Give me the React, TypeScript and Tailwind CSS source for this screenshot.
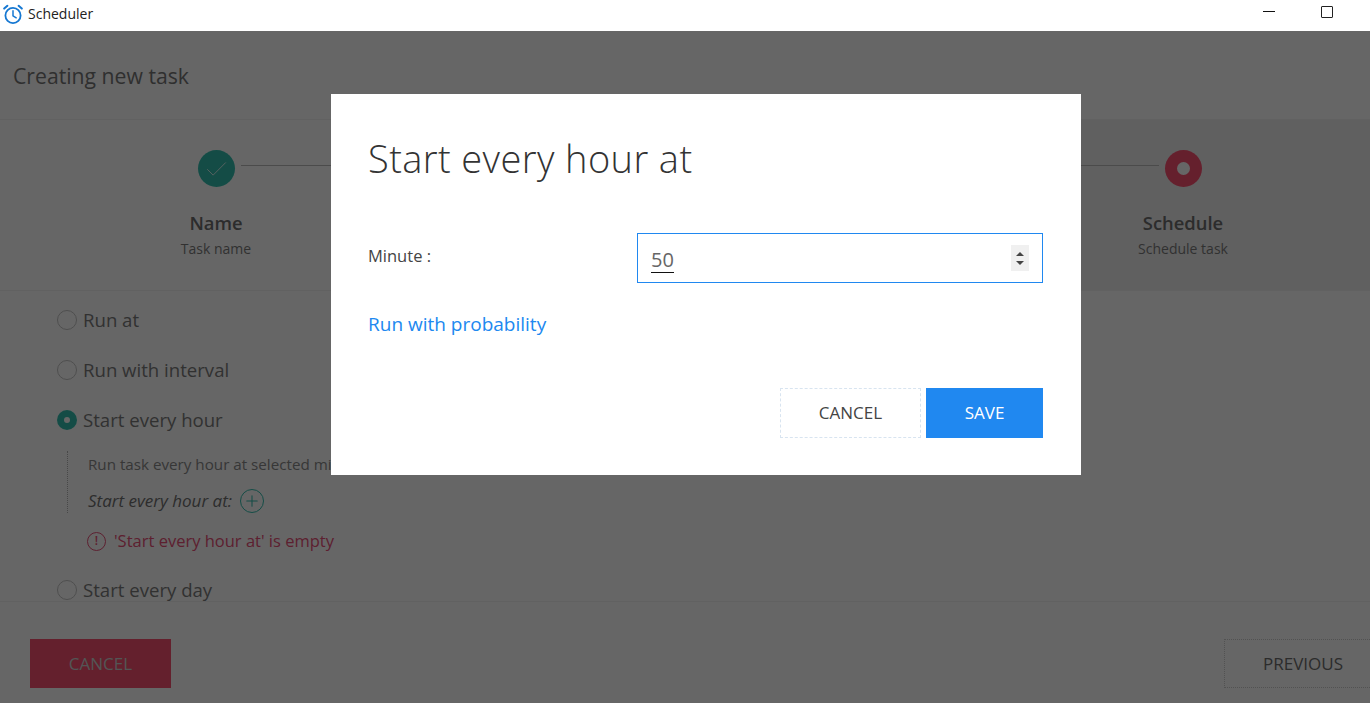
import React from 'react';
import { Check, Plus, X } from 'lucide-react';

const Radio: React.FC<{ label: string; checked?: boolean }> = ({ label, checked }) => (
  <div className="flex items-center gap-[6px] h-[20px]">
    {checked ? (
      <span className="w-[20px] h-[20px] rounded-full bg-[#33bfb0] flex items-center justify-center">
        <span className="w-[6px] h-[6px] rounded-full bg-white" />
      </span>
    ) : (
      <span className="w-[20px] h-[20px] rounded-full border border-[#c4c4c4] bg-white" />
    )}
    <span className="text-[18.6px] leading-[20px] text-[#7c7c7c]">{label}</span>
  </div>
);

const ClockLogo = () => (
  <svg viewBox="0 0 20 20" className="ml-[3px] w-[20px] h-[20px] mb-[3px]" fill="none" stroke="#1678d2" strokeLinecap="round">
    <circle cx="10" cy="11.5" r="7.6" strokeWidth="1.8" />
    <path d="M10 6.8v5l3.2 2" strokeWidth="1.5" />
    <path d="M1.2 4.6 4.4 1.8M18.8 4.6 15.6 1.8" strokeWidth="2" />
  </svg>
);

export default function App() {
  return (
    <div className="relative w-[1370px] h-[703px] overflow-hidden bg-white flex flex-col font-['Open_Sans',sans-serif]">
      <div className="h-[31px] shrink-0 flex items-center bg-white relative z-10">
        <ClockLogo />
        <span className="ml-[5px] mb-[4px] text-[14px] text-[#222222]">Scheduler</span>
        <div className="ml-auto flex items-start self-start mr-[37px] gap-[46px]">
          <span className="mt-[11px] w-[12px] border-t border-[#111111]" />
          <span className="mt-[6px] w-[12px] h-[12px] border border-[#222222] rounded-[1px]" />
        </div>
      </div>

      <div className="h-[89px] shrink-0 flex items-center justify-between border-b border-[#f2f2f2] pl-[13px] pt-[1px]">
        <span className="text-[21.2px] text-[#777777]">Creating new task</span>
        <X className="w-[24px] h-[24px] -mr-[21px] text-[#777777]" strokeWidth={1.5} />
      </div>

      <div className="h-[171px] shrink-0 border-b border-[#f2f2f2] bg-[linear-gradient(to_right,#ffffff_50%,#f0f0f0_50%)]">
        <div className="flex items-start pl-[198px] pt-[30px]">
          <span className="w-[37px] h-[37px] rounded-full bg-[#33bfb0] flex items-center justify-center">
            <Check className="w-[27px] h-[27px] mt-[2px] text-[#ffffff]" strokeWidth={0.7} />
          </span>
          <span className="ml-[6px] mt-[15px] w-[918px] border-t border-[#bbbbbb]" />
          <span className="ml-[6px] w-[37px] h-[37px] rounded-full bg-[#fd5071] flex items-center justify-center">
            <span className="w-[13px] h-[13px] rounded-full bg-white" />
          </span>
        </div>
        <div className="flex pl-[116px] pt-[24px] text-center">
          <div className="w-[200px]">
            <div className="text-[18.4px] leading-[24px] font-semibold text-[#6e6e6e]">Name</div>
            <div className="text-[14px] leading-[20px] mt-[4px] text-[#7c7c7c]">Task name</div>
          </div>
          <div className="ml-[767px] w-[200px]">
            <div className="text-[18.4px] leading-[24px] font-semibold text-[#6e6e6e]">Schedule</div>
            <div className="text-[14px] leading-[20px] mt-[4px] text-[#7c7c7c]">Schedule task</div>
          </div>
        </div>
      </div>

      <div className="h-[311px] shrink-0 overflow-hidden border-b border-[#f2f2f2] pl-[57px] pt-[19px]">
        <div className="flex flex-col gap-[30px]">
          <Radio label="Run at" />
          <Radio label="Run with interval" />
          <Radio checked label="Start every hour" />
        </div>
        <div className="ml-[10px] mt-[21px] h-[62px] border-l border-dotted border-[#b4b4b4] pl-[20px] pt-[3px]">
          <div className="text-[15.2px] leading-[20px] text-[#8a8a8a] whitespace-nowrap">Run task every hour at selected minute</div>
          <div className="flex items-center mt-[15px] h-[24px]">
            <span className="text-[17px] italic text-[#707070]">Start every hour at:</span>
            <span className="ml-[8px] w-[24px] h-[24px] rounded-full border border-[#33bfb0] flex items-center justify-center">
              <Plus className="w-[18px] h-[18px] text-[#33bfb0]" strokeWidth={1.4} />
            </span>
          </div>
        </div>
        <div className="flex items-center ml-[30px] mt-[17px] h-[22px]">
          <span className="w-[19px] h-[19px] rounded-full border-[1.5px] border-[#e85078] flex items-center justify-center text-[12px] font-semibold leading-none text-[#e85078]">!</span>
          <span className="ml-[8px] text-[16.5px] text-[#e85078]">'Start every hour at' is empty</span>
        </div>
        <div className="mt-[28px]">
          <Radio label="Start every day" />
        </div>
      </div>

      <div className="flex-1 flex items-start justify-between pl-[30px] pt-[37px]">
        <button className="w-[141px] h-[49px] bg-[#fa5070] text-[#cfd4d4] text-[17px]">CANCEL</button>
        <button className="w-[160px] -mr-[14px] h-[49px] pr-[2px] border border-dotted border-[#cccccc] text-[#6e6e6e] text-[17px]">PREVIOUS</button>
      </div>

      <div className="absolute left-0 right-0 top-[31px] bottom-0 bg-black/60" />

      <div className="absolute left-[331px] top-[94px] w-[750px] h-[381px] bg-white pl-[37px] pr-[38px] pt-[39px]">
        <h2 className="text-[38px] leading-[50px] tracking-[0.4px] font-light text-[#333333]">Start every hour at</h2>
        <div className="flex items-center mt-[50px]">
          <span className="w-[269px] pb-[4px] text-[16.5px] text-[#444444]">Minute :</span>
          <div className="w-[406px] h-[50px] border border-[#2088f0] flex items-center pl-[13px] pr-[13px]">
            <span className="text-[20px] leading-[24px] mt-[5px] text-[#666666] border-b border-[#111111]">50</span>
            <div className="ml-auto w-[18px] h-[26px] bg-[#f0f0f0] flex flex-col items-center justify-center gap-[5px]">
              <span className="w-0 h-0 border-x-[4px] border-x-transparent border-b-[4px] border-b-[#444444]" />
              <span className="w-0 h-0 border-x-[4px] border-x-transparent border-t-[4px] border-t-[#444444]" />
            </div>
          </div>
        </div>
        <div className="mt-[28px] text-[19px] leading-[26px] text-[#2088f0]">Run with probability</div>
        <div className="flex justify-end gap-[5px] mt-[51px]">
          <button className="w-[141px] h-[50px] border border-dashed border-[#d8e4f0] text-[17px] text-[#444444]">CANCEL</button>
          <button className="w-[117px] h-[50px] bg-[#2088f0] text-[17px] text-white">SAVE</button>
        </div>
      </div>
    </div>
  );
}
